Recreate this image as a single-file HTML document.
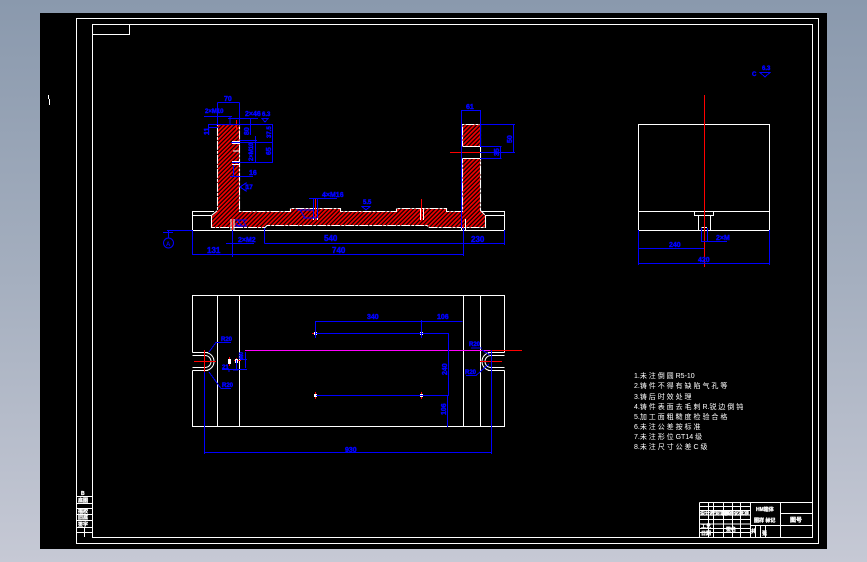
<!DOCTYPE html>
<html><head><meta charset="utf-8"><style>
html,body{margin:0;padding:0;width:867px;height:562px;overflow:hidden;background:linear-gradient(180deg,#8a99ad 0%,#a5afbf 50%,#c6c9d5 100%)}
#c{position:absolute;left:40px;top:13px;width:787px;height:536px;background:#000}
svg{position:absolute;left:0;top:0}
text{font-family:"Liberation Sans","Noto Sans CJK SC",sans-serif}
.d{fill:#0000ff;font-size:8px;font-weight:bold;stroke:#0000ff;stroke-width:.45}
.n{fill:#fff;font-size:7px}
.t{fill:#fff;font-size:5px;font-weight:bold;stroke:#fff;stroke-width:.3}
</style></head><body><div id="c"></div>
<svg width="867" height="562" viewBox="0 0 867 562">
<defs><pattern id="h" width="3" height="3" patternUnits="userSpaceOnUse" patternTransform="rotate(-45)"><rect width="3" height="3" fill="#000"/><rect width="3" height="1.8" fill="#f00000"/></pattern></defs>

<!-- frames -->
<g fill="none" stroke="#fff" shape-rendering="crispEdges">
<rect x="76.5" y="18.5" width="742" height="525"/>
<rect x="92.5" y="24.5" width="720" height="513"/>
<path d="M92.500 34.500H129.500V24.500"/>
<path d="M48.500 95V99M49.500 99V105"/>
</g>

<!-- section hatch -->
<path d="M217.500 124.500H239.500V211.500H290.500V208.500H340.500V211.500H396.500V208.500H446.500V211.500H462.500V124.500H480.500V210.500L485.500 215.500V227.500H429.500L427 225.500H267L265 227.500H211.500V215.500L217.500 210.500Z" fill="url(#h)" stroke="#fff" stroke-width="1.1" stroke-dasharray="9 1 3 1"/>
<rect x="462" y="146" width="19" height="12.500" fill="#000"/>
<g fill="none" stroke="#fff" shape-rendering="crispEdges">
<path d="M192.500 230.500V211.500H214M192.500 215.500H211.500V227.500M192.500 230.500H504.500V211.500H482M504.500 215.500H485.500V227.500"/>
<path d="M462.500 146.500H480.500V158.500H462.500"/>
<path d="M232 141.500H240M232 143.500H240M233 151H240M232 161.500H240M232 164.500H239"/>
<path d="M231 219V230M234 219V230M461.500 219V230M465.500 219V230"/>
<path d="M313.500 208V220M317.500 208V220M420.500 208V220M423.500 208V220"/>
</g>
<g fill="none" stroke="#ff0000" shape-rendering="crispEdges">
<path d="M236.500 120V130M232 142.500H246M232 162.500H246M232.500 219V240M463.500 226V240M315.500 198V220M421.500 199V219M450 152.500H480"/>
</g>

<!-- section dims -->
<g fill="none" stroke="#0000ff" shape-rendering="crispEdges">
<path d="M217.500 102.500H239.500M217.500 102.500V124M239.500 102.500V124"/>
<path d="M204 116.500H232M228 118.500H258M230 116V124"/>
<path d="M208 124.500H273M208 127.500H218M208.500 124V135M250.500 118V135"/>
<path d="M272.500 124V162.500M231 142.500H273M232 162.500H273M255.500 136V162M240 140.500H257"/>
<path d="M230 176.500H253M233.500 165V176"/>
<path d="M246 183L240 187L246 191Z"/>
<path d="M235 220H247M235 226H247M238 220L242 227M243 220L246 226M236 223L239 227"/>
<path d="M226 243.500H254M264.500 228V243.500M264.500 243.500H504.500M504.500 230V245"/>
<path d="M192.500 230V255M192.500 254.500H463.500M463.500 228V256M232.500 230V257"/>
<path d="M167 230.500H192M163 232.500H173M168.500 231V238"/>
<path d="M309 198.500H337M313.500 198V218M317.500 198V218M297 210H313M300 210L305 218M303 218H317"/>
<path d="M461.500 110.500H480.500M461.500 110V228M480.500 110V146"/>
<path d="M480 124.500H515M513.500 124V152.500M480 152.500H515M500.500 146V158.500M480 146.500H501.500M480 158.500H501.500"/>
<path d="M262 118.500H268L265 122Z"/>
<path d="M362 206.500H370L366 210Z"/>
<path d="M760 72.500H770L765 77Z"/>
</g>
<circle cx="168.500" cy="243" r="5" fill="none" stroke="#0000ff"/>
<text x="166" y="246" style="font-size:6px;fill:#0000ff;font-weight:bold">A</text>
<g class="d">
<text x="224" y="101" style="font-size:7px">70</text>
<text x="205" y="113" style="font-size:6px">2×M10</text>
<text x="245" y="116" style="font-size:7px">2×46</text>
<text x="262" y="116" style="font-size:6px">6.3</text>
<text x="249" y="175" style="font-size:7px">16</text>
<text x="246" y="189" style="font-size:6px">17</text>
<text x="238" y="242" style="font-size:7px">2×M2</text>
<text x="324" y="241" style="font-size:8px">540</text>
<text x="471" y="242" style="font-size:8px">230</text>
<text x="207" y="253" style="font-size:8px">131</text>
<text x="332" y="253" style="font-size:8px">740</text>
<text x="322" y="197" style="font-size:7px">4×M16</text>
<text x="363" y="204" style="font-size:6px">5.5</text>
<text x="466" y="109" style="font-size:7px">61</text>
<text x="752" y="76" style="font-size:6px">C</text>
<text x="762" y="70" style="font-size:6px">6.3</text>
<text transform="translate(209,135) rotate(-90)" style="font-size:7px">11</text>
<text transform="translate(249,135) rotate(-90)" style="font-size:7px">80</text>
<text transform="translate(271,138) rotate(-90)" style="font-size:6px">37.5</text>
<text transform="translate(271,155) rotate(-90)" style="font-size:7px">65</text>
<text transform="translate(253,161) rotate(-90)" style="font-size:6px">2×M10</text>
<text transform="translate(512,143) rotate(-90)" style="font-size:7px">50</text>
<text transform="translate(499,156) rotate(-90)" style="font-size:7px">35</text>
</g>

<!-- plan view -->
<g fill="none" stroke="#fff" shape-rendering="crispEdges">
<path d="M192.500 352.500V295.500H504.500V352.500M192.500 370.500V426.500H504.500V370.500"/>
<path d="M217.500 295.500V426.500M239.500 295.500V426.500M463.500 295.500V426.500M480.500 295.500V426.500"/>
<path d="M192.500 352.500H208M192.500 355.500H206M192.500 367.500H206M192.500 370.500H208"/>
<path d="M504.500 352.500H488M504.500 355.500H491M504.500 367.500H491M504.500 370.500H488"/>
</g>
<g fill="none" stroke="#fff">
<path d="M205 352.500A9 9 0 0 1 205 370.500M205 355.500A6 6 0 0 1 205 367.500"/>
<path d="M491 352.500A9 9 0 0 0 491 370.500M491 355.500A6 6 0 0 0 491 367.500"/>
</g>
<g fill="none" stroke="#ff00ff" shape-rendering="crispEdges"><path d="M245 350.500H490"/></g>
<g fill="none" stroke="#ff0000" shape-rendering="crispEdges">
<path d="M490 350.500H522M194 361.500H216M204.500 350V372M480 361.500H502M491.500 352V372"/>
<path d="M229.500 357V366M236.500 358V364M234 360.500H241M312 333.500H318M421.500 392V399M315.500 392V399"/>
</g>
<g fill="#fff" shape-rendering="crispEdges">
<rect x="228" y="359" width="3" height="5"/><rect x="235" y="359" width="3" height="4"/>
<rect x="314" y="332" width="3" height="3"/><rect x="420" y="332" width="3" height="3"/>
<rect x="314" y="394" width="3" height="3"/><rect x="420" y="394" width="3" height="3"/>
</g>
<g fill="none" stroke="#0000ff" shape-rendering="crispEdges">
<path d="M204.500 372V454M204 452.500H491.500M491.500 350V454"/>
<path d="M315.500 321.500H462.500M315.500 321V338M421.500 320V338M316 333.500H449M316 395.500H449M448.500 333V395M447.500 395V427"/>
<path d="M222 369.500H247M229 369V372M236.500 360V370M245.500 352V368M240 359.500H247M233 370H238"/>
<path d="M221 342.500H231M221 388.500H231"/>
<path d="M209 352L216 342.500H221M209 372L221 388.500"/>
<path d="M482 348H471M482 350L490 355M466 375.500H476L489 364"/>
</g>
<g class="d">
<text x="221" y="341" style="font-size:6px">R20</text>
<text x="222" y="387" style="font-size:6px">R20</text>
<text x="222" y="369" style="font-size:6px">21</text>
<text x="367" y="319" style="font-size:7px">340</text>
<text x="437" y="319" style="font-size:7px">106</text>
<text x="469" y="346" style="font-size:6px">R20</text>
<text x="465" y="374" style="font-size:6px">R20</text>
<text x="345" y="452" style="font-size:7px">930</text>
<text transform="translate(447,375) rotate(-90)" style="font-size:7px">240</text>
<text transform="translate(446,415) rotate(-90)" style="font-size:7px">106</text>
<text transform="translate(243,359) rotate(-90)" style="font-size:5px">M0</text>
</g>

<!-- right view -->
<g fill="none" stroke="#fff" shape-rendering="crispEdges">
<path d="M638.500 124.500H769.500V230.500H638.500ZM638.500 211.500H769.500"/>
<path d="M694.500 211.500V215.500H713.500V211.500M698.500 215.500V230M710.500 215.500V230M701.500 227.500H707"/>
</g>
<g fill="none" stroke="#ff0000" shape-rendering="crispEdges"><path d="M704.500 95V267"/></g>
<g fill="none" stroke="#0000ff" shape-rendering="crispEdges">
<path d="M638.500 230V265M769.500 230V265M638 248.500H704M638 263.500H770M701.500 228V241M707.500 228V241M701 241.500H727"/>
</g>
<g class="d">
<text x="669" y="247" style="font-size:7px">240</text>
<text x="698" y="262" style="font-size:7px">420</text>
<text x="716" y="240" style="font-size:7px">2×M</text>
</g>

<!-- notes -->
<g class="n">
<text x="634" y="378">1.未 注 倒 圆 R5-10</text>
<text x="634" y="388">2.铸 件 不 得 有 缺 陷 气 孔 等</text>
<text x="634" y="399">3.铸 后 时 效 处 理</text>
<text x="634" y="409">4.铸 件 表 面 去 毛 刺 R.锐 边 倒 钝</text>
<text x="634" y="419">5.加 工 面 粗 糙 度 检 验 合 格</text>
<text x="634" y="429">6.未 注 公 差 按 标 准</text>
<text x="634" y="439">7.未 注 形 位 GT14 级</text>
<text x="634" y="449">8.未 注 尺 寸 公 差 C 级</text>
</g>

<!-- title block -->
<g fill="none" stroke="#fff" shape-rendering="crispEdges">
<path d="M699.500 502.500H812M699.500 502.500V537M750.500 502.500V537M780.500 502.500V537M780.500 513.500H812M780.500 525.500H812"/>
<path d="M699.500 506.500H750M699.500 510.500H750M699.500 515H750M699.500 519.500H750M699.500 524H750M699.500 528.500H750M699.500 532.500H750"/>
<path d="M708.500 502V537M713.500 502V537M723.500 502V537M732.500 502V537M740.500 502V537"/>
<path d="M750.500 525.500H780M755.500 525V537M760.500 525V537M765.500 525V537"/>
</g>
<g class="t">
<text x="700" y="515">设计校对审核</text>
<text x="724" y="515">标准化批准</text>
<text x="701" y="528">工艺</text>
<text x="701" y="535">日期</text>
<text x="726" y="531">签名</text>
<text x="756" y="511">HM箱体</text>
<text x="754" y="522">图样 标记</text>
<text x="751" y="533">共</text>
<text x="762" y="535">张</text>
<text x="790" y="522" style="font-size:6px">图号</text>
</g>

<!-- left stamp -->
<g fill="none" stroke="#fff" shape-rendering="crispEdges">
<path d="M76.500 496.500H92.500M92.500 492V537M76.500 503.500H92.500M76.500 508.500H92.500M76.500 514.500H92.500M76.500 520.500H92.500M76.500 527.500H92.500M76.500 532.500H92.500M84.500 527V537"/>
</g>
<g class="t">
<text x="81" y="495">B</text>
<text x="78" y="502">底图</text>
<text x="78" y="513">描校</text>
<text x="78" y="519">旧底</text>
<text x="78" y="526">签字</text>
</g>
</svg>
</body></html>
